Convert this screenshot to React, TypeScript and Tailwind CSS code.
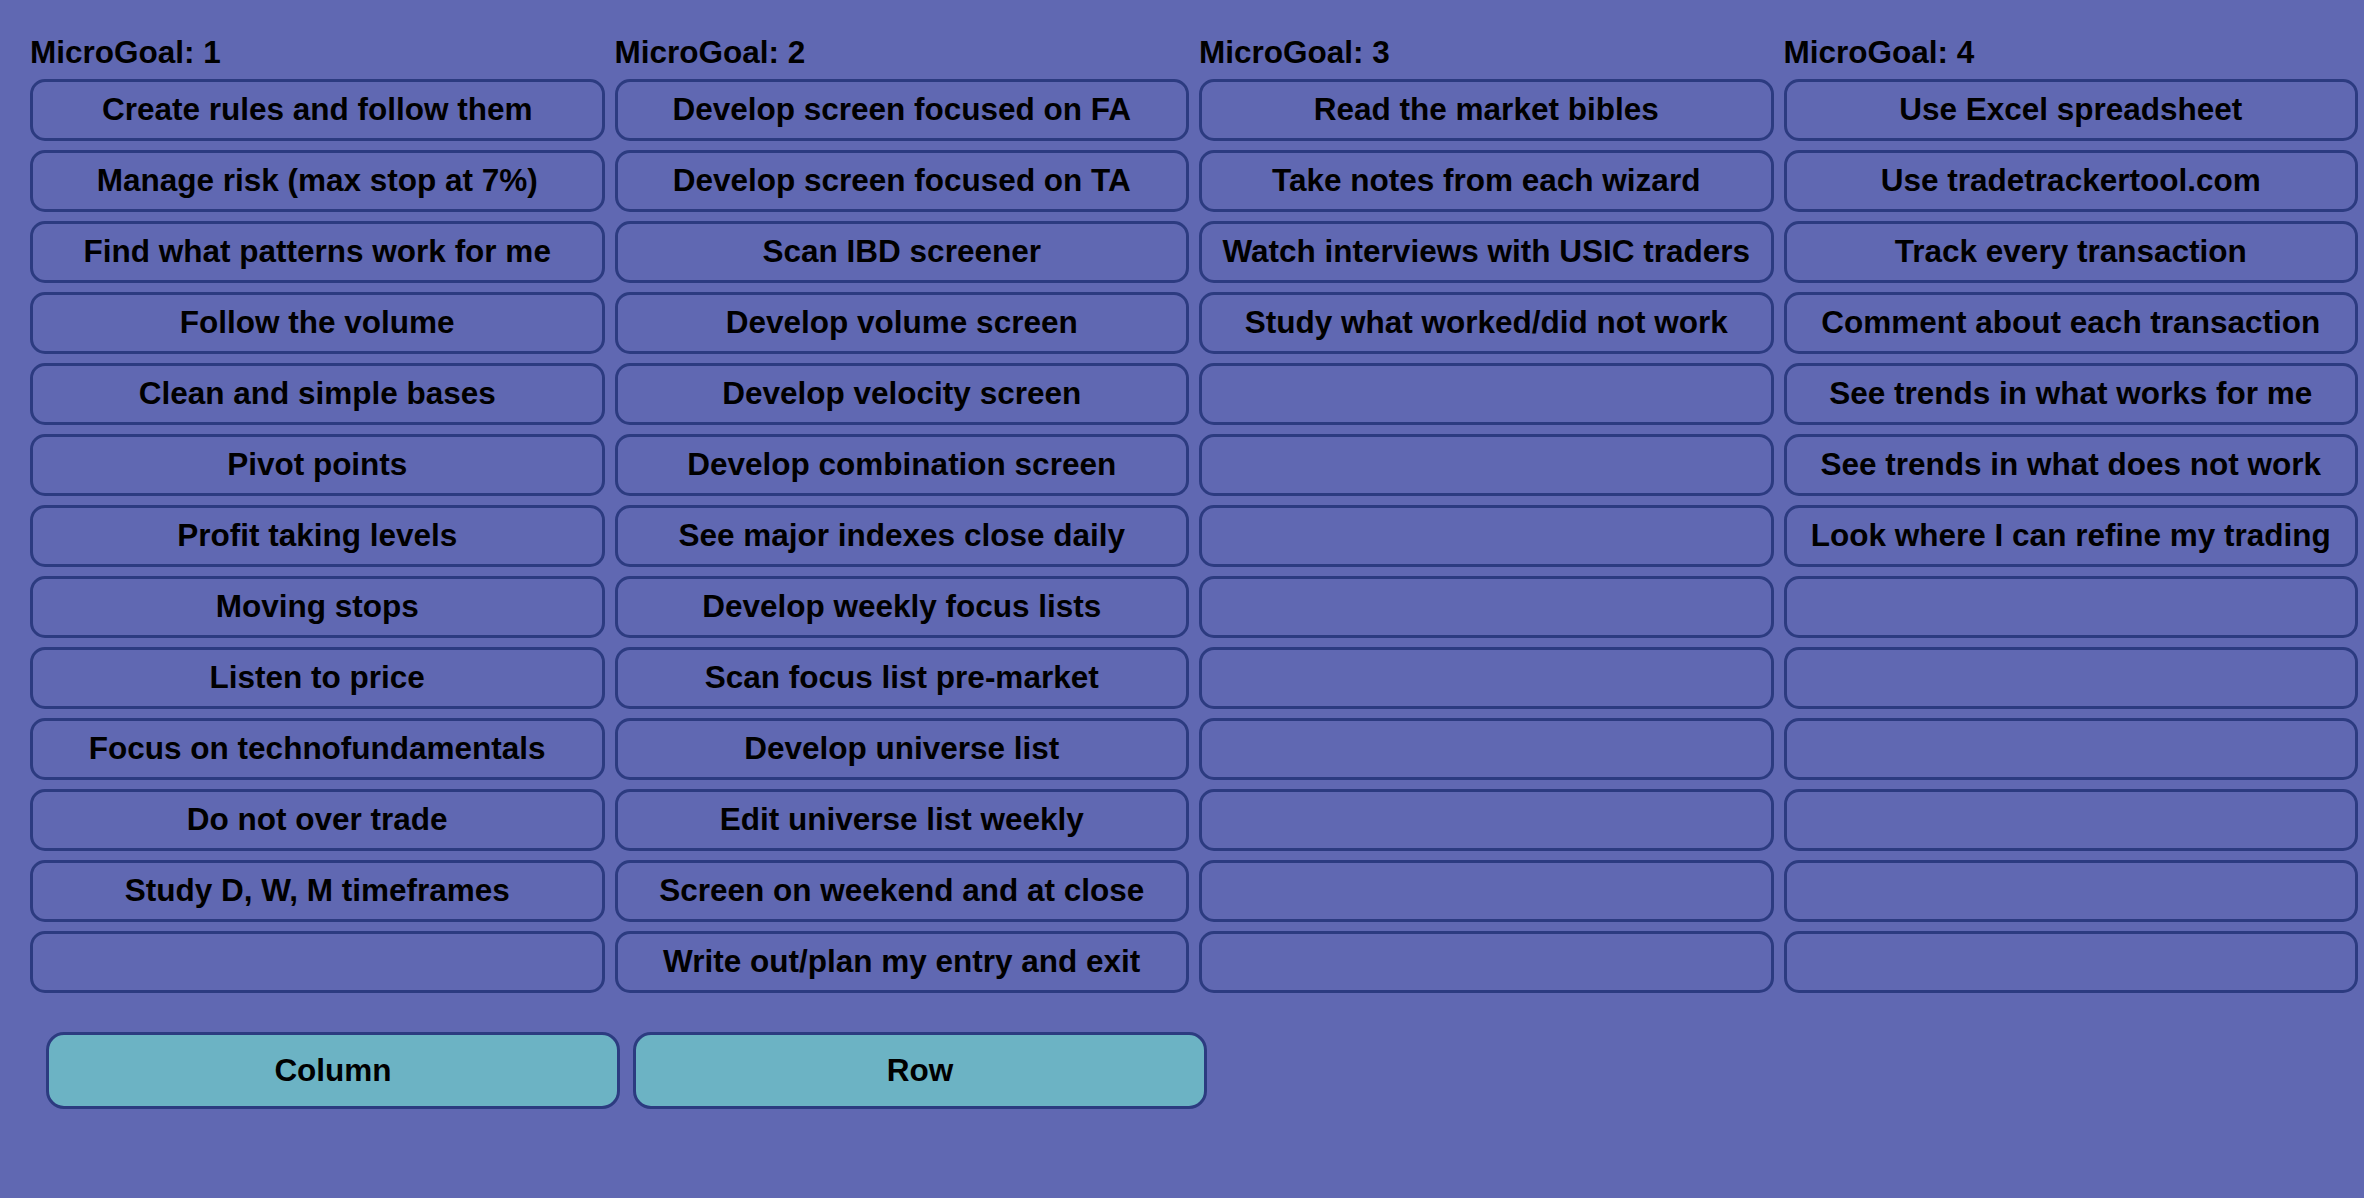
const columns: string[][] = [
  [
    "Create rules and follow them",
    "Manage risk (max stop at 7%)",
    "Find what patterns work for me",
    "Follow the volume",
    "Clean and simple bases",
    "Pivot points",
    "Profit taking levels",
    "Moving stops",
    "Listen to price",
    "Focus on technofundamentals",
    "Do not over trade",
    "Study D, W, M timeframes",
    "",
  ],
  [
    "Develop screen focused on FA",
    "Develop screen focused on TA",
    "Scan IBD screener",
    "Develop volume screen",
    "Develop velocity screen",
    "Develop combination screen",
    "See major indexes close daily",
    "Develop weekly focus lists",
    "Scan focus list pre-market",
    "Develop universe list",
    "Edit universe list weekly",
    "Screen on weekend and at close",
    "Write out/plan my entry and exit",
  ],
  [
    "Read the market bibles",
    "Take notes from each wizard",
    "Watch interviews with USIC traders",
    "Study what worked/did not work",
    "", "", "", "", "", "", "", "", "",
  ],
  [
    "Use Excel spreadsheet",
    "Use tradetrackertool.com",
    "Track every transaction",
    "Comment about each transaction",
    "See trends in what works for me",
    "See trends in what does not work",
    "Look where I can refine my trading",
    "", "", "", "", "", "",
  ],
]

function GoalCell({ text }: { text: string }) {
  return (
    <div className="h-[62px] border-[3px] border-[#2c3b80] rounded-[15px] flex items-center justify-center text-[31.5px] font-bold text-black whitespace-nowrap">
      {text}
    </div>
  )
}

export default function App() {
  return (
    <div
      className="min-h-screen w-full bg-[#6068b2] pt-[35px] pl-[30px] pr-[6px]"
      style={{ fontFamily: '"Liberation Sans", Arial, sans-serif' }}
    >
      <div className="grid grid-cols-4 gap-x-[10px]">
        {columns.map((items, i) => (
          <div key={i} className="flex flex-col">
            <div className="h-[35px] leading-[35px] text-[31.5px] font-bold text-black mb-[9px]">
              MicroGoal: {i + 1}
            </div>
            <div className="flex flex-col gap-[9px]">
              {items.map((t, j) => (
                <GoalCell key={j} text={t} />
              ))}
            </div>
          </div>
        ))}
      </div>

      <div className="flex gap-[13px] pl-[16px] mt-[39px]">
        <button className="w-[574px] h-[77px] border-[3px] border-[#2c3b80] rounded-[18px] bg-[#6cb3c4] text-[31.5px] font-bold text-black">
          Column
        </button>
        <button className="w-[574px] h-[77px] border-[3px] border-[#2c3b80] rounded-[18px] bg-[#6cb3c4] text-[31.5px] font-bold text-black">
          Row
        </button>
      </div>
    </div>
  )
}
